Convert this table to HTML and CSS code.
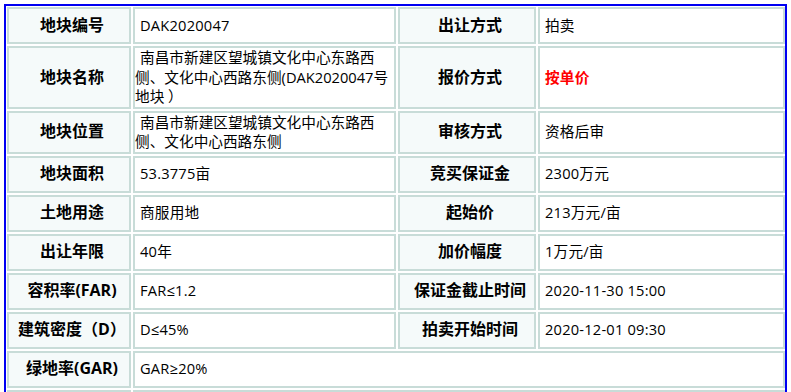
FILE: index.html
```html
<!DOCTYPE html>
<html lang="zh-CN">
<head>
<meta charset="utf-8">
<title>地块信息</title>
<link rel="stylesheet" href="styles.css">
</head>
<body>
<div class="frame">
  <table class="info">
    <tbody>
      <tr>
        <td class="lbl w1">地块编号</td>
        <td class="val w2">DAK2020047</td>
        <td class="lbl w3">出让方式</td>
        <td class="val w4">拍卖</td>
      </tr>
      <tr>
        <td class="lbl">地块名称</td>
        <td class="val multi">南昌市新建区望城镇文化中心东路西侧、文化中心西路东侧(DAK2020047号地块 ）</td>
        <td class="lbl">报价方式</td>
        <td class="val"><span class="red">按单价</span></td>
      </tr>
      <tr>
        <td class="lbl">地块位置</td>
        <td class="val multi">南昌市新建区望城镇文化中心东路西侧、文化中心西路东侧</td>
        <td class="lbl">审核方式</td>
        <td class="val">资格后审</td>
      </tr>
      <tr>
        <td class="lbl">地块面积</td>
        <td class="val">53.3775亩</td>
        <td class="lbl">竞买保证金</td>
        <td class="val">2300万元</td>
      </tr>
      <tr>
        <td class="lbl">土地用途</td>
        <td class="val">商服用地</td>
        <td class="lbl">起始价</td>
        <td class="val">213万元/亩</td>
      </tr>
      <tr>
        <td class="lbl">出让年限</td>
        <td class="val">40年</td>
        <td class="lbl">加价幅度</td>
        <td class="val">1万元/亩</td>
      </tr>
      <tr>
        <td class="lbl">容积率(FAR)</td>
        <td class="val">FAR≤1.2</td>
        <td class="lbl">保证金截止时间</td>
        <td class="val">2020-11-30 15:00</td>
      </tr>
      <tr>
        <td class="lbl">建筑密度（D）</td>
        <td class="val">D≤45%</td>
        <td class="lbl">拍卖开始时间</td>
        <td class="val">2020-12-01 09:30</td>
      </tr>
      <tr>
        <td class="lbl">绿地率(GAR)</td>
        <td class="val" colspan="3">GAR≥20%</td>
      </tr>
      <tr>
        <td class="lbl"></td>
        <td class="val" colspan="3"></td>
      </tr>
    </tbody>
  </table>
</div>
</body>
</html>
```

FILE: styles.css
```css
html, body {
  margin: 0;
  padding: 0;
  background: #ffffff;
}

body {
  font-family: "Open Sans", "Noto Sans CJK SC", sans-serif;
  color: #000;
}

.frame {
  margin: 4px 4px 0 4px;
  border: 2px solid #0000f2;
  border-bottom: 0;
}

.info {
  width: 782px;
  table-layout: fixed;
  border-collapse: separate;
  border-spacing: 2px;
  margin: -1px 0 0 -1px;
}

.info td {
  box-sizing: border-box;
  border: 2px solid #c8dcd8;
  height: 37px;
  padding: 0 0 0 5px;
  font-size: 14.667px;
  line-height: 19.5px;
  vertical-align: middle;
  color: #000;
}

.info td.val {
  letter-spacing: 0.2px;
}

.info td.lbl {
  background: #f5fafa;
  font-weight: 700;
  font-size: 16px;
  text-align: center;
  padding: 0 0 0 6px;
  white-space: nowrap;
}

.info td.multi {
  padding: 0;
  text-indent: 5px;
  letter-spacing: 0;
}

.w1 { width: 124px; }
.w2 { width: 263px; }
.w3 { width: 138px; }
.w4 { width: 247px; }

.red {
  color: #ff0000;
  font-weight: 700;
}
```
